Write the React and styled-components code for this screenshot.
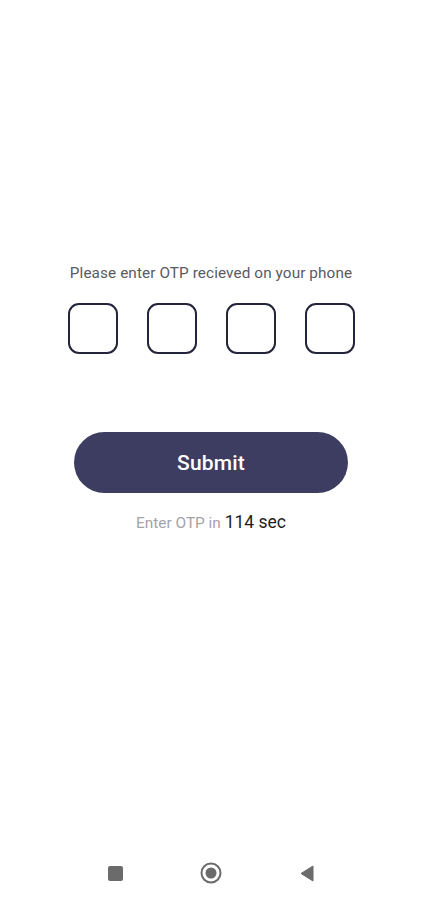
import React from "react";
import styled, { createGlobalStyle } from "styled-components";

const Global = createGlobalStyle`
  html, body { margin: 0; padding: 0; background: #ffffff; }
  body { font-family: Roboto, "Noto Sans", "Liberation Sans", sans-serif; }
  * { box-sizing: border-box; }
`;

const Screen = styled.div`
  width: 422px;
  height: 900px;
  display: flex;
  flex-direction: column;
  background: #fff;
`;

const Main = styled.main`
  flex: 1;
  display: flex;
  flex-direction: column;
  align-items: center;
  padding-top: 264px;
`;

const Prompt = styled.p`
  margin: 0;
  font-size: 15.3px;
  line-height: 19px;
  color: #5a5a5f;
  letter-spacing: 0.1px;
`;

const OtpRow = styled.div`
  display: flex;
  gap: 29px;
  margin-top: 20px;
  margin-left: 1px;
`;

const OtpBox = styled.input`
  width: 50px;
  height: 51px;
  border: 2px solid #24243a;
  border-radius: 11px;
  background: #fff;
  outline: none;
  text-align: center;
  font-size: 20px;
  font-family: inherit;
  padding: 0;
`;

const SubmitButton = styled.button`
  margin-top: 78px;
  width: 274px;
  height: 61px;
  border: none;
  border-radius: 31px;
  background: #3d3d61;
  color: #ffffff;
  font-family: Roboto, "Noto Sans", sans-serif;
  font-size: 21px;
  font-weight: 500;
  letter-spacing: 0.2px;
  cursor: pointer;
`;

const Timer = styled.p`
  margin: 19px 0 0;
  line-height: 20px;
  font-size: 15.4px;
  color: #a3a3a8;
`;

const Count = styled.span`
  font-size: 17.5px;
  color: #1e1e22;
`;

const NavBar = styled.nav`
  height: 50px;
  display: grid;
  grid-template-columns: repeat(3, 96px);
  justify-content: center;
  align-items: center;
  justify-items: center;
  padding-bottom: 4px;
`;

const Square = styled.span`
  width: 15px;
  height: 15px;
  border-radius: 2px;
  background: #6b6b6b;
`;

export default function App() {
  return (
    <>
      <Global />
      <Screen>
        <Main>
          <Prompt>Please enter OTP recieved on your phone</Prompt>
          <OtpRow>
            {[0, 1, 2, 3].map((i) => (
              <OtpBox key={i} maxLength={1} inputMode="numeric" aria-label={`OTP digit ${i + 1}`} />
            ))}
          </OtpRow>
          <SubmitButton>Submit</SubmitButton>
          <Timer>
            Enter OTP in <Count>114 sec</Count>
          </Timer>
        </Main>
        <NavBar>
          <Square />
          <svg width="22" height="22" viewBox="0 0 22 22">
            <circle cx="11" cy="11" r="9.5" fill="none" stroke="#6b6b6b" strokeWidth="2" />
            <circle cx="11" cy="11" r="5.5" fill="#6b6b6b" />
          </svg>
          <svg width="14" height="17" viewBox="0 0 14 17">
            <path d="M13 1 L1 8.5 L13 16 Z" fill="#6b6b6b" stroke="#6b6b6b" strokeWidth="1" strokeLinejoin="round" />
          </svg>
        </NavBar>
      </Screen>
    </>
  );
}
